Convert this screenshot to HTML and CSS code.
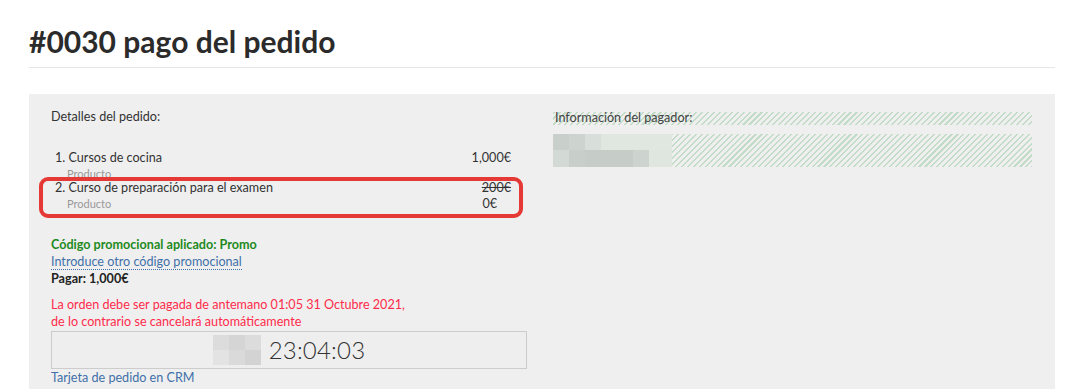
FILE: index.html
```html
<!DOCTYPE html>
<html lang="es">
<head>
<meta charset="utf-8">
<title>#0030 pago del pedido</title>
<link rel="stylesheet" href="styles.css">
</head>
<body>
<div class="page">
  <h1 class="title">#0030 pago del pedido</h1>
  <div class="panel">
    <div class="col-left">
      <div class="section-label">Detalles del pedido:</div>
      <div class="items">
        <div class="item">
          <div class="item-row">
            <span class="item-name">1. Cursos de cocina</span>
            <span class="item-price">1,000€</span>
          </div>
          <div class="item-type">Producto</div>
        </div>
        <div class="item item-discount">
          <div class="item-row">
            <span class="item-name">2. Curso de preparación para el examen</span>
            <span class="item-price old">200€</span>
          </div>
          <div class="item-row">
            <span class="item-type">Producto</span>
            <span class="item-price new">0€</span>
          </div>
          <div class="highlight"></div>
        </div>
      </div>
      <div class="promo">Código promocional aplicado: Promo</div>
      <div class="link-line"><a class="link dotted" href="#">Introduce otro código promocional</a></div>
      <div class="pay">Pagar: 1,000€</div>
      <div class="warning">La orden debe ser pagada de antemano 01:05 31 Octubre 2021,<br>de lo contrario se cancelará automáticamente</div>
      <div class="timer">
        <div class="pix pix-timer">
          <span style="background:#dcdcdc"></span><span style="background:#d5d5d5"></span><span style="background:#dcdcdc"></span>
          <span style="background:#e3e3e3"></span><span style="background:#dadada"></span><span style="background:#d3d3d3"></span>
        </div>
        <span class="timer-text">23:04:03</span>
      </div>
      <div class="link-line"><a class="link" href="#">Tarjeta de pedido en CRM</a></div>
    </div>
    <div class="col-right">
      <div class="payer-label hatch"><span>Información del pagador:</span></div>
      <div class="payer-data hatch">
        <div class="pix pix-payer">
          <span style="background:#c9cfca"></span><span style="background:#cdd3ce"></span><span style="background:#d8dfdb"></span><span style="background:#e0e7e1"></span><span style="background:#e0e7e1"></span><span style="background:#e0e7e1"></span><span style="background:#e0e7e1"></span>
          <span style="background:#d3d9d4"></span><span style="background:#c8cec9"></span><span style="background:#c6ccc7"></span><span style="background:#c6ccc7"></span><span style="background:#c6ccc7"></span><span style="background:#cdd3ce"></span><span style="background:#dfe6e0"></span>
        </div>
      </div>
    </div>
  </div>
</div>
</body>
</html>
```

FILE: styles.css
```css
* { box-sizing: border-box; }
html, body { margin: 0; padding: 0; background: #fff; }
body {
  font-family: "Lato", "Open Sans", "Liberation Sans", sans-serif;
  font-size: 12.6px;
  color: #333;
}
.page {
  padding: 0 14px 0 29px;
}
.title {
  margin: 0;
  padding: 24px 0 8px;
  font-size: 30px;
  line-height: 35px;
  font-weight: 700;
  color: #2b2b2b;
  border-bottom: 1px solid #e6e6e6;
}
.panel {
  margin-top: 26px;
  background: #efefef;
  display: flex;
  gap: 26px;
  padding: 15px 23px 20px 22px;
}
.col-left {
  width: 476px;
  flex: none;
}
.col-right {
  flex: 1;
  padding-top: 3px;
}
.section-label {
  line-height: 16px;
}
.items {
  margin-top: 25px;
  padding: 0 16px 0 4px;
}
.item { position: relative; }
.item-row {
  display: flex;
  justify-content: space-between;
  align-items: baseline;
}
.item-name { line-height: 15px; }
.item-type {
  display: block;
  padding-left: 12px;
  padding-top: 2px;
  font-size: 11px;
  line-height: 13px;
  color: #999;
}
.item-price { line-height: 15px; }
.item-price.old { text-decoration: line-through; }
.item-price.new { padding-right: 14px; line-height: 13px; }
.highlight {
  position: absolute;
  left: -16px;
  right: -12px;
  top: -3px;
  bottom: -8px;
  border: 4px solid #e53935;
  border-radius: 9px;
  pointer-events: none;
}
.promo {
  margin-top: 26px;
  color: #1e8a1e;
  font-weight: 700;
  line-height: 17px;
}
.link-line { line-height: 17px; }
.link {
  color: #3f6fa8;
  text-decoration: none;
}
.link.dotted {
  border-bottom: 1px dotted #3f6fa8;
}
.pay {
  font-weight: 700;
  line-height: 17px;
  color: #222;
}
.warning {
  margin-top: 9px;
  color: #ff2b4b;
  line-height: 17px;
}
.timer {
  margin-top: 1px;
  height: 38px;
  border: 1px solid #cccccc;
  background: #eeeeee;
  display: flex;
  align-items: center;
  justify-content: center;
  gap: 8px;
}
.timer-text {
  font-size: 24px;
  font-weight: 300;
  color: #333;
  line-height: 30px;
  letter-spacing: 0.2px;
}
.pix { display: grid; }
.pix span { display: block; }
.pix-timer {
  grid-template-columns: repeat(3, 16px);
  grid-template-rows: 15px 15px;
}
.hatch {
  background-color: #efefef;
  background-image: repeating-linear-gradient(135deg, #c3dcc7 0 1.5px, transparent 1.5px 4.2px);
}
.payer-label {
  line-height: 13px;
  height: 13px;
  color: #444;
}
.payer-label span {
  padding-left: 2px;
  position: relative;
  top: -1px;
}
.payer-data {
  margin-top: 9px;
  height: 33px;
}
.pix-payer {
  width: 119px;
  grid-template-columns: repeat(6, 16px) 23px;
  grid-template-rows: 16px 17px;
}
```
